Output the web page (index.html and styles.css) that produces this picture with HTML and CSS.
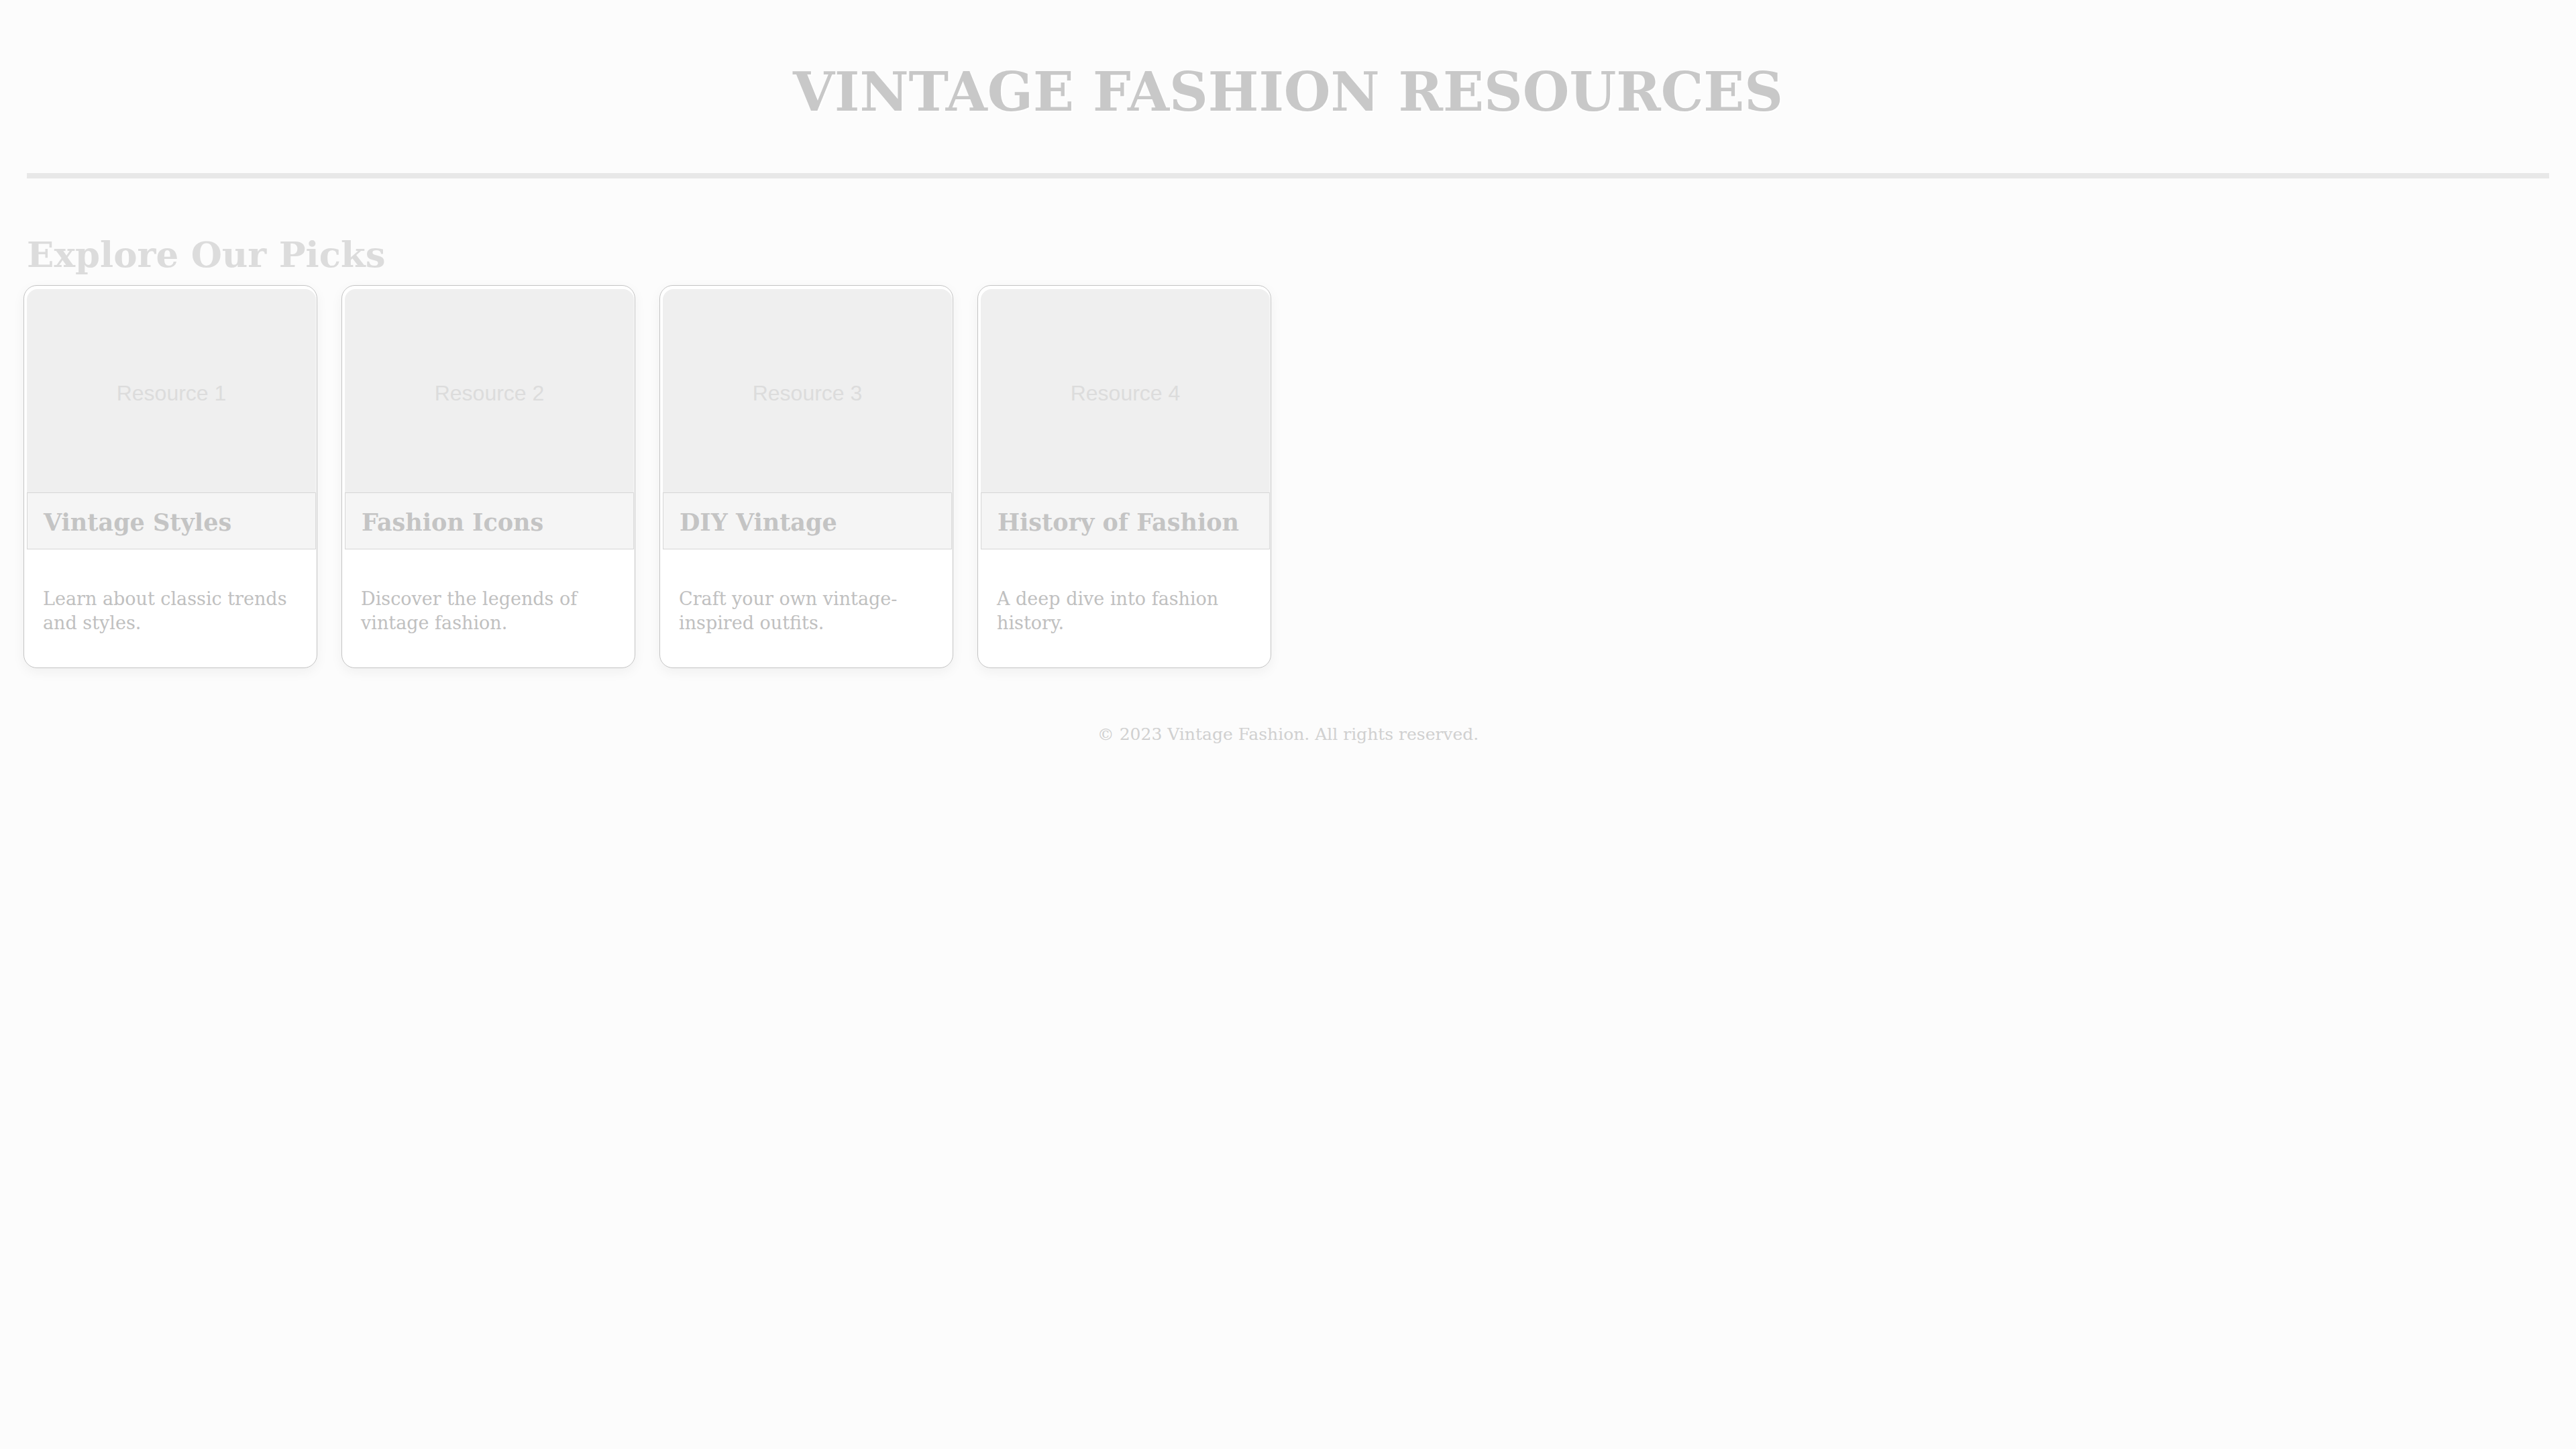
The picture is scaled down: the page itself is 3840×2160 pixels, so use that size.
FILE: index.html
```html
<!DOCTYPE html>
<html lang="en">
<head>
<meta charset="utf-8">
<title>Vintage Fashion Resources</title>
<link rel="stylesheet" href="styles.css">
</head>
<body>
<header class="site-header">
  <h1 class="site-title">VINTAGE FASHION RESOURCES</h1>
</header>
<main class="content">
  <h2 class="section-title">Explore Our Picks</h2>
  <div class="cards">
    <article class="card">
      <div class="card-image"><span>Resource 1</span></div>
      <h3 class="card-title">Vintage Styles</h3>
      <p class="card-text">Learn about classic trends and styles.</p>
    </article>
    <article class="card">
      <div class="card-image"><span>Resource 2</span></div>
      <h3 class="card-title">Fashion Icons</h3>
      <p class="card-text">Discover the legends of vintage fashion.</p>
    </article>
    <article class="card">
      <div class="card-image"><span>Resource 3</span></div>
      <h3 class="card-title">DIY Vintage</h3>
      <p class="card-text">Craft your own vintage-inspired outfits.</p>
    </article>
    <article class="card">
      <div class="card-image"><span>Resource 4</span></div>
      <h3 class="card-title">History of Fashion</h3>
      <p class="card-text">A deep dive into fashion history.</p>
    </article>
  </div>
</main>
<footer class="site-footer">
  <p>© 2023 Vintage Fashion. All rights reserved.</p>
</footer>
</body>
</html>
```

FILE: styles.css
```css
html, body {
  margin: 0;
  padding: 0;
  background: #fcfcfc;
}
body {
  font-family: Georgia, "DejaVu Serif", serif;
}
.site-header {
  margin: 0 40px;
  padding: 89px 0 73px;
  border-bottom: 8px solid #e8e8e8;
  text-align: center;
}
.site-title {
  margin: 0;
  font-size: 80px;
  line-height: 96px;
  font-weight: bold;
  color: #c8c8c8;
  text-shadow: 2px 2px 0 rgba(255, 255, 255, 0.9);
}
.content {
  padding: 0 35px;
}
.section-title {
  margin: 77px 0 10px 5px;
  font-size: 53px;
  line-height: 72px;
  font-weight: bold;
  color: #dcdcdc;
}
.cards {
  display: flex;
  gap: 36px;
  align-items: flex-start;
}
.card {
  width: 438px;
  box-sizing: border-box;
  background: #ffffff;
  border: 1px solid #c4c4c4;
  border-radius: 20px;
  padding: 5px 1px 0 4px;
  box-shadow: 0 6px 18px rgba(0, 0, 0, 0.05);
  overflow: hidden;
}
.card-image {
  height: 303px;
  box-sizing: border-box;
  padding-top: 8px;
  background: #efefef;
  border-radius: 16px 16px 0 0;
  display: flex;
  align-items: center;
  justify-content: center;
  font-family: "Liberation Sans", Arial, sans-serif;
  font-size: 32px;
  color: #dcdcdc;
}
.card-title {
  margin: 0;
  padding: 20px 24px 15px;
  background: #f5f5f5;
  border: 1px solid #d6d6d6;
  font-size: 35px;
  line-height: 48px;
  font-weight: bold;
  color: #c4c4c4;
}
.card-text {
  margin: 0;
  padding: 56px 24px 48px;
  font-size: 27px;
  line-height: 36px;
  color: #c0c0c0;
}
.site-footer {
  text-align: center;
  padding-top: 82px;
}
.site-footer p {
  margin: 0;
  font-size: 25px;
  line-height: 34px;
  color: #d0d0d0;
}
```
